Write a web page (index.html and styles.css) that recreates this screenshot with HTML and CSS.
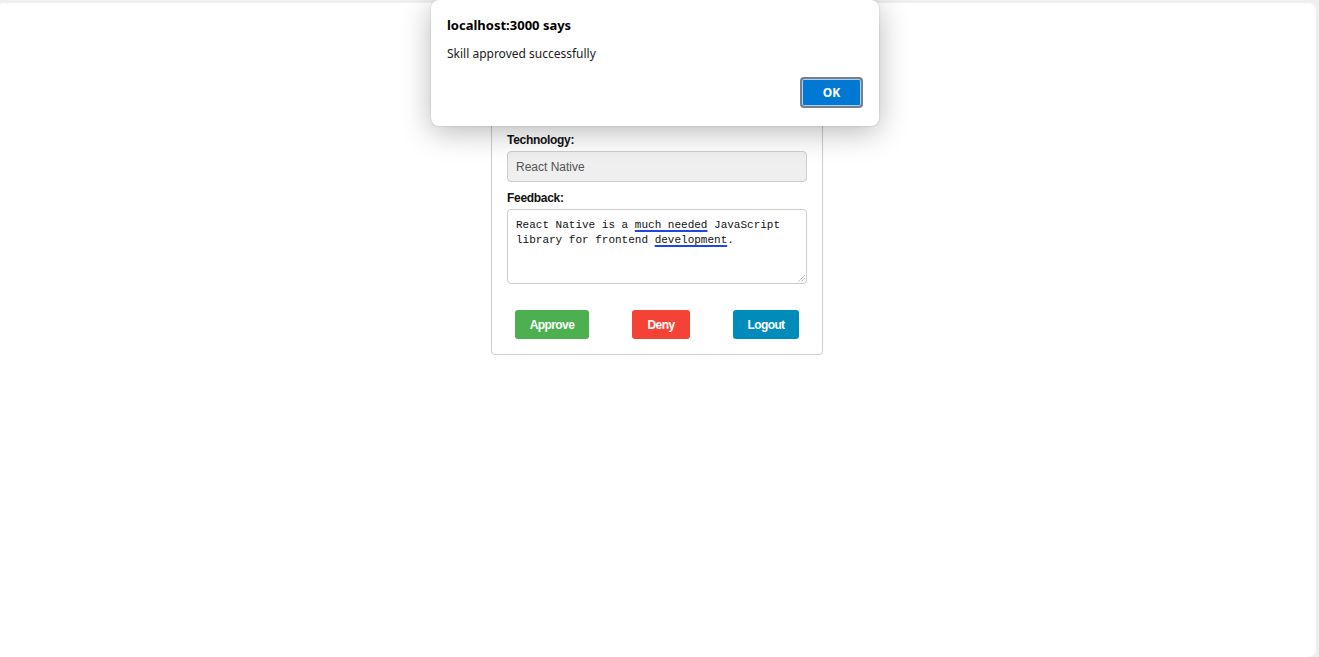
FILE: index.html
```html
<!DOCTYPE html>
<html lang="en">
<head>
<meta charset="utf-8">
<title>Skill Review</title>
<link rel="stylesheet" href="styles.css">
</head>
<body>
<div class="page">
  <div class="card">
    <h2 class="card-title">Skill Details</h2>
    <div class="field">
      <label class="label">Employee:</label>
      <input class="input" type="text" value="John Doe" disabled>
    </div>
    <div class="field">
      <label class="label">Technology:</label>
      <input class="input" type="text" value="React Native" disabled>
    </div>
    <div class="field">
      <label class="label">Feedback:</label>
      <div class="textarea" role="textbox" aria-multiline="true"><span class="line">React Native is a <span class="spell">much needed</span> JavaScript</span><span class="line">library for frontend <span class="spell">development</span>.</span><svg class="grip" width="7" height="7" viewBox="0 0 7 7"><path d="M6.5 0.5 L0.5 6.5 M6.5 3.5 L3.5 6.5" stroke="#777" stroke-width="1" stroke-dasharray="1 1" fill="none"/></svg></div>
    </div>
    <div class="actions">
      <button class="btn btn-approve">Approve</button>
      <button class="btn btn-deny">Deny</button>
      <button class="btn btn-logout">Logout</button>
    </div>
  </div>

  <div class="dialog" role="alertdialog">
    <div class="dialog-title">localhost:3000 says</div>
    <div class="dialog-msg">Skill approved successfully</div>
    <div class="dialog-actions">
      <button class="dialog-ok">OK</button>
    </div>
  </div>
</div>
</body>
</html>
```
FILE: styles.css
```css
html, body {
  margin: 0;
  padding: 0;
  height: 100%;
}
body {
  background: #efefef;
  font-family: "Liberation Sans", Arial, sans-serif;
  overflow: hidden;
}
.page {
  position: relative;
  box-sizing: border-box;
  margin: 3px 3px 0 0;
  height: 654px;
  background: #ffffff;
  border-radius: 3px 8px 8px 0;
  padding: 21px 2px 0 0;
}
.card {
  box-sizing: border-box;
  width: 332px;
  margin: 0 auto;
  border: 1px solid #cccccc;
  border-radius: 4px;
  padding: 15px;
}
.card-title {
  margin: 0 0 14px;
  font-size: 18px;
  line-height: 20px;
  text-align: center;
}
.field {
  display: flex;
  flex-direction: column;
  margin-bottom: 8px;
}
.label {
  font-weight: bold;
  font-size: 12px;
  letter-spacing: -0.3px;
  line-height: 16px;
  color: #111;
  margin-bottom: 3px;
}
.input {
  box-sizing: border-box;
  height: 31px;
  width: 300px;
  margin: 0;
  border: 1px solid #cccccc;
  border-radius: 4px;
  padding: 0 8px;
  background: #efefef;
  color: #545454;
  font-family: "Liberation Sans", Arial, sans-serif;
  font-size: 12px;
}
.textarea {
  position: relative;
  box-sizing: border-box;
  width: 300px;
  height: 75px;
  border: 1px solid #cccccc;
  border-radius: 4px;
  padding: 8px 8px 6px;
  font-family: "Liberation Mono", "DejaVu Sans Mono", monospace;
  font-size: 11px;
  line-height: 15px;
  color: #111;
  margin-bottom: 18px;
}
.line {
  display: block;
}
.spell {
  text-decoration: underline;
  text-decoration-color: #2147e0;
  text-decoration-thickness: 2px;
  text-underline-offset: 2px;
}
.grip {
  position: absolute;
  right: 1px;
  bottom: 1px;
}
.actions {
  display: flex;
  justify-content: space-between;
  padding: 0 8px 0 8px;
}
.btn {
  border: 0;
  border-radius: 3px;
  height: 29px;
  padding: 0;
  color: #ffffff;
  font-family: "Liberation Sans", Arial, sans-serif;
  font-weight: bold;
  font-size: 12px;
  letter-spacing: -0.6px;
  cursor: pointer;
}
.btn-approve { background: #4caf50; width: 74px; }
.btn-deny { background: #f44336; width: 58px; }
.btn-logout { background: #008cba; width: 66px; }

.dialog {
  position: absolute;
  top: -3px;
  left: 431px;
  box-sizing: border-box;
  width: 448px;
  height: 126px;
  background: #ffffff;
  border-radius: 8px;
  box-shadow: 0 6px 30px rgba(0, 0, 0, 0.28), 0 0 2px rgba(0, 0, 0, 0.2);
  padding: 16px 16px 0 16px;
  font-family: "Noto Sans", "Open Sans", sans-serif;
}
.dialog-title {
  font-weight: bold;
  font-size: 13px;
  line-height: 18px;
  color: #000;
}
.dialog-msg {
  margin-top: 11px;
  font-size: 12px;
  line-height: 18px;
  color: #1a1a1a;
}
.dialog-actions {
  display: flex;
  justify-content: flex-end;
  margin-top: 14px;
}
.dialog-ok {
  box-sizing: border-box;
  width: 63px;
  height: 31px;
  border: 2px solid #75808c;
  border-radius: 4px;
  box-shadow: inset 0 0 0 1px #a9d1f5;
  background: #0078d4;
  color: #ffffff;
  font-family: "Noto Sans", "Open Sans", sans-serif;
  font-weight: bold;
  font-size: 12px;
}
```
